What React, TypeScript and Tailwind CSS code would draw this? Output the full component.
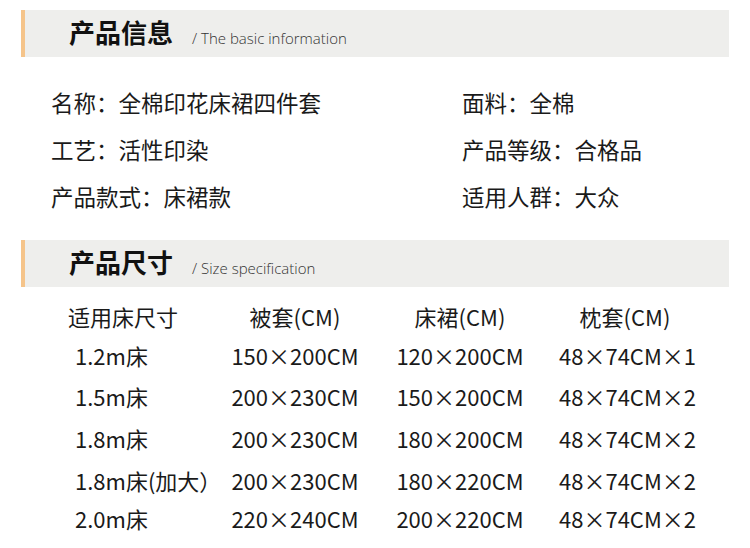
import React from 'react';

const cjk = { fontFamily: '"Noto Sans CJK SC", "Noto Sans", sans-serif' };

interface SectionTitleProps {
  title: string;
  sub: string;
}

function SectionTitle({ title, sub }: SectionTitleProps) {
  return (
    <div className="mx-[21px] flex h-[47px] bg-[#eeeeec]">
      <div className="w-[4px] bg-[#f5c48a]" />
      <div className="flex items-end pb-[8px] pl-[44px]">
        <span className="text-[26px] leading-[34px] font-bold text-[#111]" style={cjk}>
          {title}
        </span>
        <span
          className="ml-[19px] pb-[2px] text-[15px] leading-[18px] font-light text-[#333]"
          style={{ fontFamily: '"Open Sans", "DejaVu Sans", sans-serif' }}
        >
          / {sub}
        </span>
      </div>
    </div>
  );
}

const info = [
  ['名称：全棉印花床裙四件套', '面料：全棉'],
  ['工艺：活性印染', '产品等级：合格品'],
  ['产品款式：床裙款', '适用人群：大众'],
];

const sizes = [
  { bed: '1.2m床', quilt: '150×200CM', skirt: '120×200CM', pillow: '48×74CM×1', h: 'h-[42px]' },
  { bed: '1.5m床', quilt: '200×230CM', skirt: '150×200CM', pillow: '48×74CM×2', h: 'h-[40px]' },
  { bed: '1.8m床', quilt: '200×230CM', skirt: '180×200CM', pillow: '48×74CM×2', h: 'h-[44px]' },
  { bed: '1.8m床(加大）', quilt: '200×230CM', skirt: '180×220CM', pillow: '48×74CM×2', h: 'h-[40px]' },
  { bed: '2.0m床', quilt: '220×240CM', skirt: '200×220CM', pillow: '48×74CM×2', h: 'h-[36px]' },
];

export default function App() {
  return (
    <div className="h-[548px] w-[750px] overflow-hidden bg-white pt-[10px] text-[#1a1a1a]" style={cjk}>
      <SectionTitle title="产品信息" sub="The basic information" />

      {/* 产品信息 */}
      <div className="mt-[22px] grid grid-cols-[411px_1fr] pl-[51px] text-[22.5px]">
        {info.map(([left, right], i) => (
          <React.Fragment key={i}>
            <div className="h-[47px] leading-[47px] whitespace-nowrap">{left}</div>
            <div className="h-[47px] leading-[47px] whitespace-nowrap">{right}</div>
          </React.Fragment>
        ))}
      </div>

      <div className="mt-[20px]">
        <SectionTitle title="产品尺寸" sub="Size specification" />
      </div>

      {/* 产品尺寸 */}
      <div className="mt-[11px] text-[22px]">
        <div className="grid h-[36px] grid-cols-[213px_164px_166px_164px] items-center leading-none">
          <div className="pl-[68px]">适用床尺寸</div>
          <div className="text-center">被套(CM)</div>
          <div className="text-center">床裙(CM)</div>
          <div className="text-center">枕套(CM)</div>
        </div>
        {sizes.map((row) => (
          <div
            key={row.bed}
            className={`grid ${row.h} grid-cols-[213px_164px_166px_164px] items-center leading-none`}
          >
            <div className="pl-[75px] whitespace-nowrap">{row.bed}</div>
            <div className="text-center whitespace-nowrap">{row.quilt}</div>
            <div className="text-center whitespace-nowrap">{row.skirt}</div>
            <div className="pl-[16px] whitespace-nowrap">{row.pillow}</div>
          </div>
        ))}
      </div>
    </div>
  );
}
